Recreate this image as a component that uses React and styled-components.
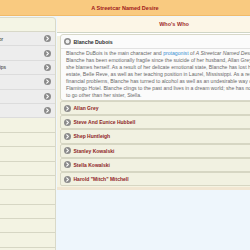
import React from 'react'
import styled, { createGlobalStyle } from 'styled-components'

const Global = createGlobalStyle`
  html, body {
    margin: 0;
    padding: 0;
    overflow: hidden;
    background: #eef6fc;
    font-family: "Liberation Sans", Arial, sans-serif;
  }
`

const Page = styled.div`
  width: 250px;
  height: 250px;
  overflow: hidden;
`

const TopBar = styled.div`
  height: 16px;
  background: #f9ca80;
  border-bottom: 1px solid #f0bb6a;
  box-sizing: border-box;
  display: flex;
  align-items: center;
  justify-content: center;
`

const Title = styled.h1`
  margin: 0;
  font-size: 5.5px;
  font-weight: 700;
  color: #a0191b;
`

const Body = styled.div`
  display: flex;
  padding-top: 1px;
`

const LeftClip = styled.div`
  width: 56px;
  flex-shrink: 0;
  overflow: hidden;
  display: flex;
  justify-content: flex-end;
`

const LeftPanel = styled.div`
  width: 96px;
  flex-shrink: 0;
  background: #f3f3e3;
  border-right: 1px solid #d9d9c8;
  border-top: 1px solid #dcdccb;
  border-top-right-radius: 4px;
  box-sizing: border-box;
  height: 240px;
`

const LeftHead = styled.div`
  height: 13px;
  background: #f4f5e5;
  border-bottom: 1px solid #d8d8c8;
  border-top-right-radius: 4px;
`

const NavRow = styled.div`
  height: 14.4px;
  box-sizing: border-box;
  display: flex;
  align-items: center;
  padding: 0 4px 0 6px;
  background: ${p => (p.$empty ? '#f3f3e3' : '#ededed')};
  border-bottom: 1px solid ${p => (p.$empty ? '#d6d6c4' : '#dcdcdc')};
`

const NavText = styled.span`
  flex: 1;
  font-size: 5px;
  color: #333;
  white-space: nowrap;
`

const RightPanel = styled.div`
  width: 234px;
  margin-left: 1px;
  flex-shrink: 0;
  background: #f5f3e2;
  border-bottom: 3px solid #f1e6d2;
  box-sizing: border-box;
  height: 173px;
`

const RightHead = styled.div`
  height: 15.5px;
  background: #fcf6e7;
  border-bottom: 1px solid #cfd5c6;
  box-sizing: border-box;
  display: flex;
  align-items: center;
  justify-content: center;
  font-size: 5.5px;
  font-weight: 700;
  color: #9e2a2b;
`

const Content = styled.div`
  padding: 1.5px 3px 0;
  background: linear-gradient(#ffffff 0 3px, #f5f3e2 3px);
`

const Card = styled.div`
  background: #fbfbfb;
  border: 1px solid #d8d8c8;
  border-radius: 3px;
`

const CardHead = styled.div`
  height: 13px;
  display: flex;
  align-items: center;
  gap: 3px;
  padding-left: 2.5px;
  border-bottom: 1px solid #e2e2e2;
  font-size: 5.2px;
  font-weight: 700;
  color: #2f2f2f;
`

const Desc = styled.p`
  margin: 0;
  padding: 1px 6px 1px 5px;
  font-size: 5.15px;
  line-height: 7px;
  color: #6a6a6a;
`

const Link = styled.span`
  color: #3a8fd2;
`

const Row = styled.div`
  height: 14.2px;
  box-sizing: border-box;
  display: flex;
  align-items: center;
  gap: 3px;
  padding-left: 2.5px;
  background: #f1f1e1;
  border: 1px solid #d6d6c3;
  border-radius: 2px;
  font-size: 5px;
  font-weight: 700;
  color: #8e2526;
`

const Arrow = () => (
  <svg width="7" height="7" viewBox="0 0 14 14">
    <circle cx="7" cy="7" r="7" fill="#8b8b8b" />
    <path d="M5.5 3.8 L8.7 7 L5.5 10.2" stroke="#fff" strokeWidth="2.2" fill="none" strokeLinecap="round" strokeLinejoin="round" />
  </svg>
)

const Open = () => (
  <svg width="7" height="7" viewBox="0 0 14 14">
    <circle cx="7" cy="7" r="7" fill="#8b8b8b" />
    <circle cx="7" cy="7" r="3.8" fill="#efefef" />
  </svg>
)

const nav = ['About the Author', 'Summary', 'Key Relationships', 'Themes', 'Quotes', 'Analysis']
const people = [
  'Allan Grey',
  'Steve And Eunice Hubbell',
  'Shep Huntleigh',
  'Stanley Kowalski',
  'Stella Kowalski',
  'Harold "Mitch" Mitchell',
]

const App = () => (
  <Page>
    <Global />
    <TopBar>
      <Title>A Streetcar Named Desire</Title>
    </TopBar>
    <Body>
      <LeftClip>
        <LeftPanel>
          <LeftHead />
          {nav.map(n => (
            <NavRow key={n}>
              <NavText>{n}</NavText>
              <Arrow />
            </NavRow>
          ))}
          {Array.from({ length: 9 }).map((_, i) => (
            <NavRow key={i} $empty />
          ))}
        </LeftPanel>
      </LeftClip>
      <RightPanel>
        <RightHead>Who's Who</RightHead>
        <Content>
          <Card>
            <CardHead>
              <Open />
              Blanche Dubois
            </CardHead>
            <Desc>
              Blanche DuBois is the main character and <Link>protagonist</Link> of <i>A Streetcar Named Desire</i>.
              <br />
              Blanche has been emotionally fragile since the suicide of her husband, Allan Grey, for which she
              blames herself. As a result of her delicate emotional state, Blanche has lost her family's estate,
              Belle Reve, as well as her teaching position in Laurel, Mississippi. As a result of her financial
              problems, Blanche has turned to alcohol as well as an undesirable way of life at the Flamingo Hotel.
              Blanche clings to the past and lives in a dream world; she has no other place to go other than her
              sister, Stella.
            </Desc>
          </Card>
          {people.map(p => (
            <Row key={p}>
              <Arrow />
              {p}
            </Row>
          ))}
        </Content>
      </RightPanel>
    </Body>
  </Page>
)

export default App
